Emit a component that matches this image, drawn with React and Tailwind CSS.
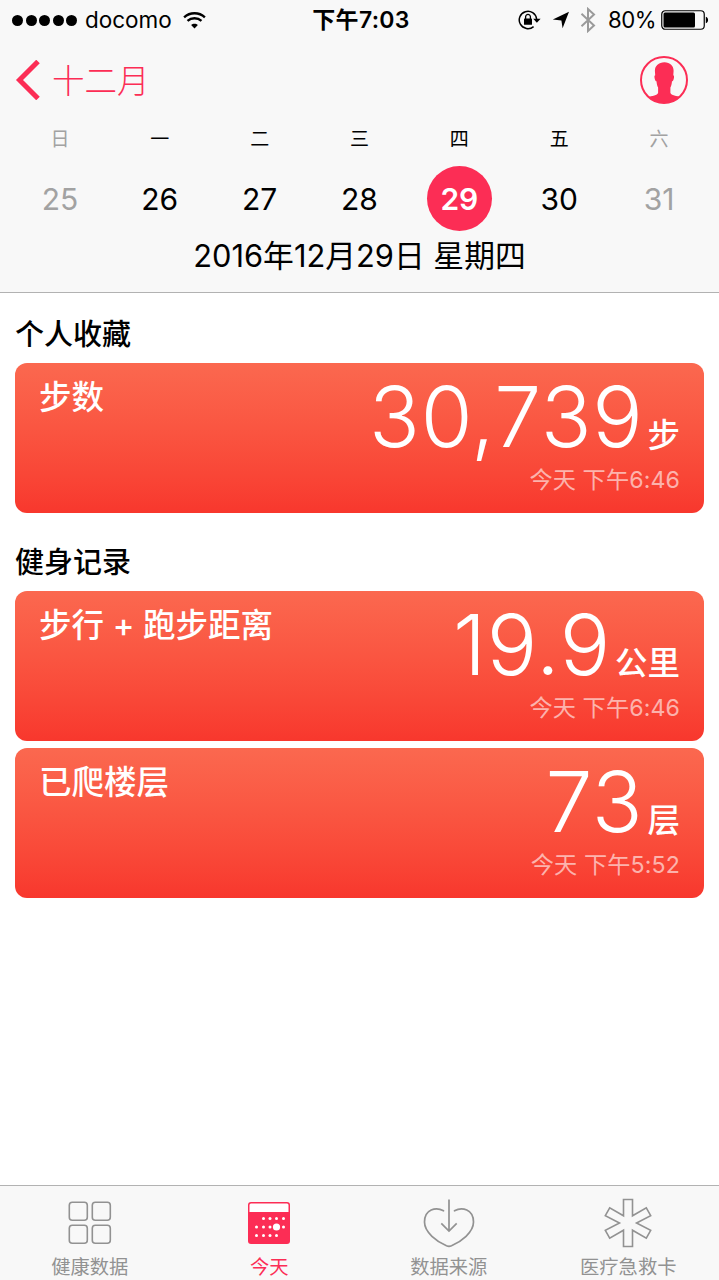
import React from 'react';
import clsx from 'clsx';

const days = [
    { label: '日', date: 25, muted: true },
    { label: '一', date: 26 },
    { label: '二', date: 27 },
    { label: '三', date: 28 },
    { label: '四', date: 29, selected: true },
    { label: '五', date: 30 },
    { label: '六', date: 31, muted: true },
];

const sections = [
    {
        title: '个人收藏',
        cards: [{ name: '步数', value: '30,739', unit: '步', time: '今天 下午6:46' }],
    },
    {
        title: '健身记录',
        cards: [
            { name: '步行 + 跑步距离', value: '19.9', unit: '公里', time: '今天 下午6:46' },
            { name: '已爬楼层', value: '73', unit: '层', time: '今天 下午5:52' },
        ],
    },
];

const WifiIcon = () => (
    <svg width="23" height="17" viewBox="0 0 24 18" fill="none" stroke="black" strokeWidth="2.5">
        <path d="M1 5.6C7.2-.1 16.800-.1 23 5.600" />
        <path d="M4.600 9.500c4.200-3.800 10.600-3.800 14.800 0" />
        <path d="M12 17.500l-3.600-3.700c2-1.900 5.200-1.900 7.200 0z" fill="black" stroke="none" />
    </svg>
);

const RotationLockIcon = () => (
    <svg width="23" height="20" viewBox="0 0 23 20" fill="none">
        <path d="M15.600 16.600A8.700 8.700 0 1 1 18.600 9" stroke="black" strokeWidth="1.500" />
        <path d="M15.200 8.800h7.400l-3.700 4z" fill="black" />
        <rect x="6" y="8.600" width="8" height="6.200" rx=".6" fill="black" />
        <path d="M7.600 9V6.800a2.400 2.400 0 0 1 4.800 0V9" stroke="black" strokeWidth="1.300" />
    </svg>
);

const LocationIcon = () => (
    <svg width="18" height="18" viewBox="0 0 18 18">
        <path d="M17 .8L10.600 17.200 9.400 9.400 .8 8.600z" fill="black" />
    </svg>
);

const BluetoothIcon = () => (
    <svg width="16" height="26" viewBox="0 0 16 26" fill="none" stroke="#9a9a9a" strokeWidth="2">
        <path d="M1.500 6.800L14 18.500 8 24V2l6 5.500L1.500 19.200" />
    </svg>
);

const BatteryIcon = () => (
    <svg width="48" height="20" viewBox="0 0 48 20">
        <rect x=".75" y=".75" width="42.500" height="18.500" rx="3.500" fill="none" stroke="black" strokeWidth="1.200" />
        <rect x="2.500" y="2.500" width="31.500" height="15" rx="1.500" fill="black" />
        <path d="M44.800 6.800c3 .6 3 5.800 0 6.400z" fill="black" />
    </svg>
);

const ProfileIcon = () => (
    <svg width="48" height="48" viewBox="0 0 48 48">
        <defs>
            <clipPath id="avatar">
                <circle cx="24" cy="24" r="23" />
            </clipPath>
        </defs>
        <path
            d="M24.400 6.200c-5.800 0-9.600 3.600-9.500 8.800l.3 4.200c-1 .2-.9 2-.4 3.700.4 1.500.9 2.300 1.700 2.300.3 2.800.6 4.600 1.600 6.200v5.400c-.8 2.800-5.400 2.800-11.400 4.800V48h35.500v-6.400c-6-2-11-2-11.800-4.800v-5.400c1-1.600 1.300-3.400 1.600-6.200.8 0 1.300-.8 1.700-2.300.5-1.700.6-3.500-.4-3.700l.3-4.200c.1-5.200-3.400-8.800-9.200-8.800z"
            fill="#fc2d55"
            clipPath="url(#avatar)"
        />
        <circle cx="24" cy="24" r="23" fill="none" stroke="#fc2d55" strokeWidth="2" />
    </svg>
);

const GridIcon = () => (
    <svg width="44" height="44" viewBox="0 0 44 44" fill="none" stroke="#929292" strokeWidth="1.600">
        <rect x="1.300" y="1.300" width="18" height="18" rx="3" />
        <rect x="24.300" y="1.300" width="18" height="18" rx="3" />
        <rect x="1.300" y="24.300" width="18" height="18" rx="3" />
        <rect x="24.300" y="24.300" width="18" height="18" rx="3" />
    </svg>
);

const calendarDots = [
    [15.500, 16.500], [22, 16.500], [28.500, 16.500], [35.500, 16.500],
    [8.500, 25], [15.500, 25], [22, 25], [35.500, 25],
    [8.500, 33.500], [15.500, 33.500], [22, 33.500], [28.500, 33.500],
];

const CalendarIcon = () => (
    <svg width="42" height="42" viewBox="0 0 42 42">
        <rect width="42" height="42" rx="3" fill="#fc2d55" />
        <path d="M1.500 10V3a1.500 1.500 0 0 1 1.500-1.500h36A1.500 1.500 0 0 1 40.500 3v7z" fill="#fff" />
        {calendarDots.map(([x, y]) => (
            <circle key={`${x}-${y}`} cx={x} cy={y} r="1.500" fill="#fff" />
        ))}
        <circle cx="28.500" cy="25" r="3.600" fill="#fff" />
    </svg>
);

const SourcesIcon = () => (
    <svg width="52" height="50" viewBox="0 0 52 50" fill="none" stroke="#929292" strokeWidth="1.700" strokeLinecap="round">
        <path d="M20.500 12.800C13 8.500 1.500 11.200 1.500 24c0 10.500 12.500 19.600 22 23.800q2.500 1 5 0C38 43.600 50.500 34.500 50.500 24c0-12.800-11.500-15.500-19-11.200" />
        <path d="M26 1.500V33M18.300 25.300L26 33l7.700-7.700" strokeLinecap="butt" />
    </svg>
);

const MedicalIcon = () => (
    <svg width="48" height="50" viewBox="0 0 48 50" fill="none" stroke="#929292" strokeWidth="1.600">
        <path d="M19.500 1.500h9v16.300l13.800-8 4.400 7.800L32.500 25l14.200 7.400-4.400 7.800-13.800-8v16.300h-9V32.200l-13.800 8-4.400-7.800L15.500 25 1.300 17.600l4.400-7.800 13.800 8z" />
    </svg>
);

const tabs = [
    { label: '健康数据', icon: <GridIcon /> },
    { label: '今天', icon: <CalendarIcon />, active: true },
    { label: '数据来源', icon: <SourcesIcon /> },
    { label: '医疗急救卡', icon: <MedicalIcon /> },
];

const StatusBar = () => (
    <div className="grid grid-cols-[1fr_auto_1fr] items-center h-10 pl-3 pr-[10px] text-[23px] leading-none">
        <div className="flex items-center">
            <div className="flex gap-[2.500px]">
                {[0, 1, 2, 3, 4].map((i) => (
                    <span key={i} className="size-[11px] rounded-full bg-black" />
                ))}
            </div>
            <span className="ml-2 mr-[11px] text-[22.500px]">docomo</span>
            <WifiIcon />
        </div>
        <div className="pt-px pl-px font-semibold tracking-[0.3px]">下午7:03</div>
        <div className="flex items-center justify-end">
            <RotationLockIcon />
            <span className="ml-[11px]"><LocationIcon /></span>
            <span className="ml-[10px] mr-3"><BluetoothIcon /></span>
            <span className="mr-[5px] text-[22.200px] tracking-[-0.5px]">80%</span>
            <BatteryIcon />
        </div>
    </div>
);

const HealthCard = ({ name, value, unit, time }) => (
    <div className="flex justify-between h-[149.500px] rounded-[12px] px-6 text-white bg-linear-to-b from-[#fb684f] to-[#f8372d]">
        <div className="pt-[15px] text-[32.500px] leading-10 font-medium">{name}</div>
        <div className="flex flex-col items-end">
            <div className="flex items-baseline h-[103px] leading-[108px]">
                <span className="text-[84px] font-light tracking-[0.7px]">{value}</span>
                <span className="ml-[4px] text-[32.500px] font-medium">{unit}</span>
            </div>
            <div className="text-[23.200px] leading-7 tracking-[0.1px] text-white/60">{time}</div>
        </div>
    </div>
);

const App = () => {
    return (
        <div className="flex flex-col w-[719px] h-[1280px] overflow-hidden bg-white text-black font-['Inter','Noto_Sans_CJK_SC',sans-serif]">
            {/* Header */}
            <header className="h-[293px] shrink-0 bg-[#f8f8f8] border-b border-[#b2b2b2]">
                <StatusBar />
                <div className="flex items-center justify-between h-20 pl-[15px] pr-[31px] text-[#fc2d55]">
                    <div className="flex items-center">
                        <svg width="25" height="40" viewBox="0 0 25 40" fill="none" stroke="#fc2d55" strokeWidth="5">
                            <path d="M23 1.500L4.500 20 23 38.500" />
                        </svg>
                        <span className="ml-3 pt-[3px] text-[32.500px] leading-10 font-light">十二月</span>
                    </div>
                    <ProfileIcon />
                </div>
                <div className="grid grid-cols-7 pl-[10px] pr-[10px]">
                    {days.map((day) => (
                        <div key={day.date} className={clsx('flex flex-col items-center', day.muted && 'text-[#a2a2a2]')}>
                            <span className="h-[46px] pt-[2px] text-[19px] leading-9">{day.label}</span>
                            <span
                                className={clsx(
                                    'flex items-center justify-center size-[65px] pt-px rounded-full text-[30px]',
                                    day.selected && 'bg-[#fc2d55] text-white font-semibold'
                                )}
                            >
                                {day.date}
                            </span>
                        </div>
                    ))}
                </div>
                <div className="mt-[5px] text-center text-[30.800px] leading-10">2016年12月29日 星期四</div>
            </header>

            {/* Cards */}
            <main className="flex-1 px-[15px]">
                {sections.map((section) => (
                    <section key={section.title} className="h-[228px]">
                        <h2 className="h-[70px] pt-[22px] text-[29px] leading-10 font-medium">{section.title}</h2>
                        <div className="flex flex-col gap-[7.500px]">
                            {section.cards.map((card) => (
                                <HealthCard key={card.name} {...card} />
                            ))}
                        </div>
                    </section>
                ))}
            </main>

            {/* Tab bar */}
            <nav className="grid grid-cols-4 h-[95px] pr-px shrink-0 bg-[#f8f8f8] border-t border-[#b2b2b2]">
                {tabs.map((tab) => (
                    <div
                        key={tab.label}
                        className={clsx('flex flex-col items-center pt-3', tab.active ? 'text-[#fc2d55]' : 'text-[#929292]')}
                    >
                        <div className="flex items-center justify-center h-[50px]">{tab.icon}</div>
                        <span className="mt-[5px] text-[19.300px] leading-7">{tab.label}</span>
                    </div>
                ))}
            </nav>
        </div>
    );
};

export default App;
